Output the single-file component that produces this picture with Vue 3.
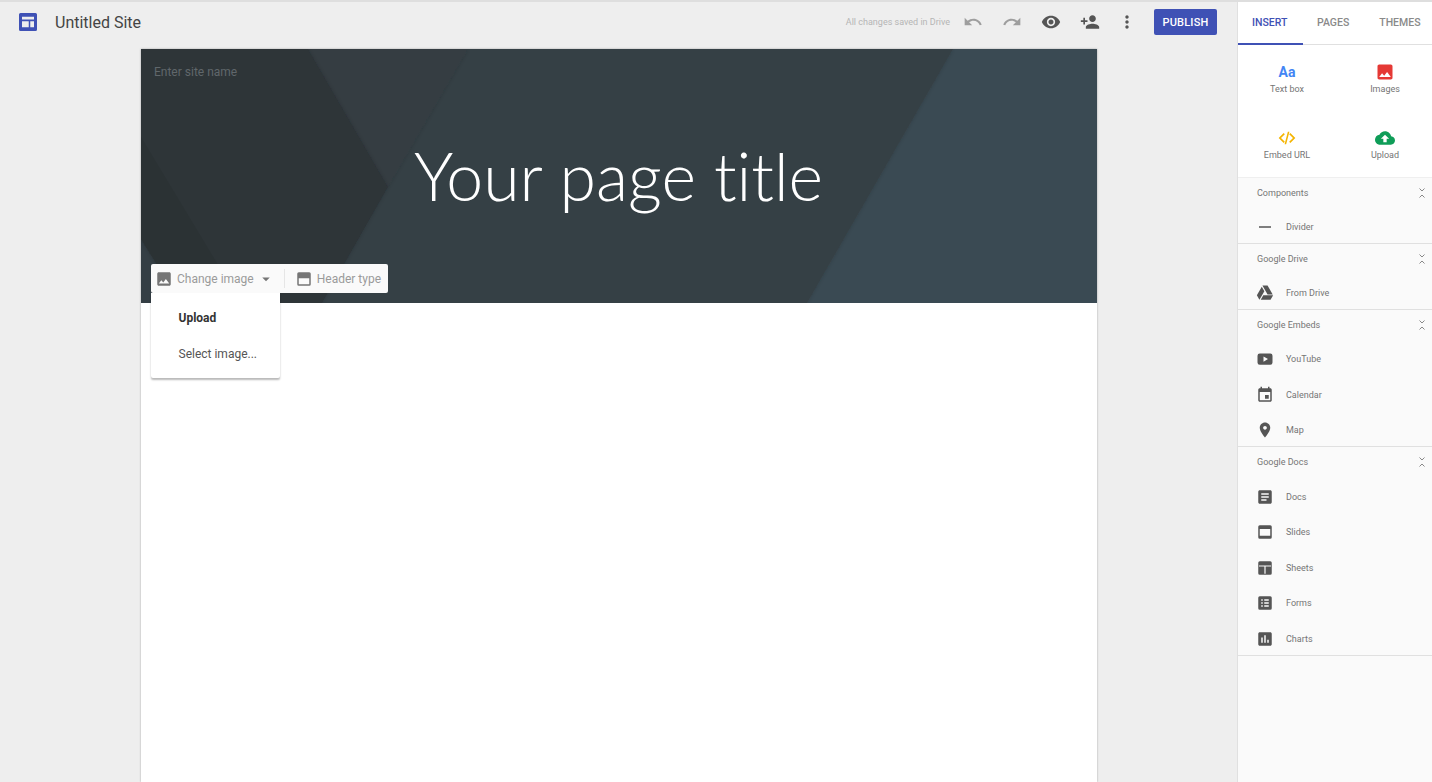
<script setup>
const P = {
  undo: 'M12.5 8c-2.65 0-5.05.99-6.9 2.6L2 7v9h9l-3.62-3.62c1.39-1.16 3.16-1.88 5.12-1.88 3.54 0 6.55 2.31 7.6 5.5l2.37-.78C21.08 11.03 17.15 8 12.5 8z',
  redo: 'M18.4 10.6C16.55 8.99 14.15 8 11.5 8c-4.65 0-8.58 3.03-9.96 7.22L3.9 16c1.05-3.19 4.05-5.5 7.6-5.5 1.95 0 3.73.72 5.12 1.88L13 16h9V7l-3.6 3.6z',
  eye: 'M12 4.5C7 4.5 2.73 7.61 1 12c1.73 4.39 6 7.5 11 7.5s9.27-3.11 11-7.5c-1.73-4.39-6-7.5-11-7.5zM12 17c-2.76 0-5-2.24-5-5s2.24-5 5-5 5 2.24 5 5-2.24 5-5 5zm0-8c-1.66 0-3 1.34-3 3s1.34 3 3 3 3-1.34 3-3-1.34-3-3-3z',
  add: 'M15 12c2.21 0 4-1.79 4-4s-1.79-4-4-4-4 1.79-4 4 1.79 4 4 4zm-9-2V7H4v3H1v2h3v3h2v-3h3v-2H6zm9 4c-2.67 0-8 1.34-8 4v2h16v-2c0-2.66-5.33-4-8-4z',
  more: 'M12 8c1.1 0 2-.9 2-2s-.9-2-2-2-2 .9-2 2 .9 2 2 2zm0 2c-1.1 0-2 .9-2 2s.9 2 2 2 2-.9 2-2-.9-2-2-2zm0 6c-1.1 0-2 .9-2 2s.9 2 2 2 2-.9 2-2-.9-2-2-2z',
  photo: 'M21 19V5c0-1.1-.9-2-2-2H5c-1.1 0-2 .9-2 2v14c0 1.1.9 2 2 2h14c1.1 0 2-.9 2-2zM8.5 13.5l2.5 3.01L14.5 12l4.5 6H5l3.5-4.5z',
  code: 'M9.4 16.6L4.8 12l4.6-4.6L8 6l-6 6 6 6 1.4-1.4zm5.2 0l4.6-4.6-4.6-4.6L16 6l6 6-6 6-1.4-1.4zM13 4.5h1.9L11 19.5H9.1z',
  cloud: 'M19.35 10.04C18.67 6.59 15.64 4 12 4 9.11 4 6.6 5.64 5.35 8.04 2.34 8.36 0 10.91 0 14c0 3.31 2.69 6 6 6h13c2.76 0 5-2.24 5-5 0-2.64-2.05-4.78-4.65-4.96zM14 13v4h-4v-4H7l5-5 5 5h-3z',
  header: 'M5 3h14a2 2 0 0 1 2 2v14a2 2 0 0 1-2 2H5a2 2 0 0 1-2-2V5a2 2 0 0 1 2-2zm0 8v8h14v-8z',
  logo: 'M2 0h20a2 2 0 0 1 2 2v20a2 2 0 0 1-2 2H2a2 2 0 0 1-2-2V2a2 2 0 0 1 2-2zM4 5v3.5h16V5zM4 11v8h9v-8zM15 11v8h5v-8z',
  divider: 'M4 11h16v2H4z',
  drive: 'M7.71 3.5L1.15 15l3.43 6 6.55-11.5zM9.73 15l-3.43 6h13.12l3.43-6zM22.28 14L15.42 2H8.58l6.85 12z',
  youtube: 'M5 4.5h14a3 3 0 0 1 3 3v9a3 3 0 0 1-3 3H5a3 3 0 0 1-3-3v-9a3 3 0 0 1 3-3zM10 8.5v7l6-3.5z',
  calendar: 'M17 12h-5v5h5v-5zM16 1v2H8V1H6v2H5c-1.11 0-1.99.9-1.99 2L3 19c0 1.1.89 2 2 2h14c1.1 0 2-.9 2-2V5c0-1.1-.9-2-2-2h-1V1h-2zm3 18H5V8h14v11z',
  map: 'M12 2C8.13 2 5 5.13 5 9c0 5.25 7 13 7 13s7-7.75 7-13c0-3.87-3.13-7-7-7zm0 9.5c-1.38 0-2.5-1.12-2.5-2.5s1.12-2.5 2.5-2.5 2.5 1.12 2.5 2.5-1.12 2.5-2.5 2.5z',
  docs: 'M19 3H5c-1.1 0-2 .9-2 2v14c0 1.1.9 2 2 2h14c1.1 0 2-.9 2-2V5c0-1.1-.9-2-2-2zm-5 14H7v-2h7v2zm3-4H7v-2h10v2zm0-4H7V7h10v2z',
  slides: 'M5 3h14a2 2 0 0 1 2 2v14a2 2 0 0 1-2 2H5a2 2 0 0 1-2-2V5a2 2 0 0 1 2-2zm0 5v9h14V8z',
  sheets: 'M5 3h14a2 2 0 0 1 2 2v14a2 2 0 0 1-2 2H5a2 2 0 0 1-2-2V5a2 2 0 0 1 2-2zM4 8.5V10h7.2v9.5h1.6V10H20V8.5z',
  forms: 'M5 3h14a2 2 0 0 1 2 2v14a2 2 0 0 1-2 2H5a2 2 0 0 1-2-2V5a2 2 0 0 1 2-2zm2 4v2h2V7zm4 0v2h6V7zm-4 4v2h2v-2zm4 0v2h6v-2zm-4 4v2h2v-2zm4 0v2h6v-2z',
  charts: 'M19 3H5c-1.1 0-2 .9-2 2v14c0 1.1.9 2 2 2h14c1.1 0 2-.9 2-2V5c0-1.1-.9-2-2-2zM9 17H7v-7h2v7zm4 0h-2V7h2v10zm4 0h-2v-4h2v4z'
}

const actions = [
  { key: 'undo', cls: 'muted' },
  { key: 'redo', cls: 'muted' },
  { key: 'eye', cls: 'strong' },
  { key: 'add', cls: 'strong' },
  { key: 'more', cls: 'strong narrow' }
]

const sections = [
  { title: 'Components', items: [{ label: 'Divider', icon: 'divider' }] },
  { title: 'Google Drive', items: [{ label: 'From Drive', icon: 'drive' }] },
  { title: 'Google Embeds', items: [
    { label: 'YouTube', icon: 'youtube' },
    { label: 'Calendar', icon: 'calendar' },
    { label: 'Map', icon: 'map' }
  ] },
  { title: 'Google Docs', items: [
    { label: 'Docs', icon: 'docs' },
    { label: 'Slides', icon: 'slides' },
    { label: 'Sheets', icon: 'sheets' },
    { label: 'Forms', icon: 'forms' },
    { label: 'Charts', icon: 'charts' }
  ] }
]
</script>

<template>
  <div class="app">
    <div class="work">
      <header class="topbar">
        <svg class="logo" viewBox="0 0 24 24"><path fill-rule="evenodd" :d="P.logo" /></svg>
        <span class="site-title">Untitled Site</span>
        <span class="saved">All changes saved in Drive</span>
        <span v-for="a in actions" :key="a.key" class="action" :class="a.cls">
          <svg viewBox="0 0 24 24"><path :d="P[a.key]" /></svg>
        </span>
        <button class="publish">PUBLISH</button>
      </header>

      <div class="canvas">
        <section class="hero">
          <svg class="hero-art" viewBox="0 0 956 254" preserveAspectRatio="none">
            <defs>
              <filter id="soft" x="-10%" y="-10%" width="120%" height="120%">
                <feDropShadow dx="0" dy="0" stdDeviation="2" flood-color="#000" flood-opacity="0.16" />
              </filter>
            </defs>
            <rect width="956" height="254" fill="#3a4a53" />
            <polygon points="-20,0 812,0 666,254 -20,254" fill="#364045" filter="url(#soft)" />
            <polygon points="160,0 327,0 247,138" fill="#343d42" filter="url(#soft)" />
            <polygon points="0,190 40,254 0,254" fill="#343e44" />
            <polygon points="167,0 247,138 181,254 40,254 0,190 0,0" fill="#2d3439" filter="url(#soft)" />
            <polygon points="0,88 100,254 40,254 0,190" fill="#2b3234" />
          </svg>
          <div class="site-name">Enter site name</div>
          <h1 class="page-title">Your page title</h1>
          <div class="hero-tools">
            <span class="tool">
              <svg viewBox="0 0 24 24"><path :d="P.photo" /></svg>
              Change image
              <svg class="caret" viewBox="0 0 24 24"><path d="M7 10l5 5 5-5z" /></svg>
            </span>
            <span class="tool-sep"></span>
            <span class="tool">
              <svg viewBox="0 0 24 24"><path fill-rule="evenodd" :d="P.header" /></svg>
              Header type
            </span>
          </div>
          <div class="menu">
            <div class="menu-item bold">Upload</div>
            <div class="menu-item">Select image...</div>
          </div>
        </section>
      </div>
    </div>

    <aside class="side">
      <nav class="tabs">
        <span class="tab active">INSERT</span>
        <span class="tab">PAGES</span>
        <span class="tab">THEMES</span>
      </nav>
      <div class="inserts">
        <div class="insert">
          <span class="aa">Aa</span>
          <span>Text box</span>
        </div>
        <div class="insert">
          <svg class="red" viewBox="0 0 24 24"><path :d="P.photo" /></svg>
          <span>Images</span>
        </div>
        <div class="insert">
          <svg class="yellow" viewBox="0 0 24 24"><path :d="P.code" /></svg>
          <span>Embed URL</span>
        </div>
        <div class="insert">
          <svg class="green" viewBox="0 0 24 24"><path :d="P.cloud" /></svg>
          <span>Upload</span>
        </div>
      </div>
      <div class="groups">
        <section v-for="s in sections" :key="s.title" class="group">
          <div class="group-head">
            <span>{{ s.title }}</span>
            <svg class="chev" viewBox="0 0 8 12">
              <path d="M1.5 1.5L4 4l2.5-2.5M1.5 10.5L4 8l2.5 2.5" />
            </svg>
          </div>
          <div v-for="i in s.items" :key="i.label" class="row">
            <svg viewBox="0 0 24 24"><path fill-rule="evenodd" :d="P[i.icon]" /></svg>
            <span>{{ i.label }}</span>
          </div>
        </section>
      </div>
    </aside>
  </div>
</template>

<style>
html, body { margin: 0; height: 100%; overflow: hidden; background: #eeeeee; }
</style>

<style scoped>
.app {
  display: flex;
  height: 782px;
  width: 1432px;
  overflow: hidden;
  box-sizing: border-box;
  border-top: 2px solid #dedede;
  background: #eeeeee;
  font-family: Roboto, "Liberation Sans", sans-serif;
}
.work { width: 1237px; flex: none; display: flex; flex-direction: column; }
.topbar {
  height: 47px;
  flex: none;
  box-sizing: border-box;
  display: flex;
  align-items: center;
  padding: 0 20px 7px 19px;
}
.logo { width: 18px; height: 18px; fill: #3f51b5; }
.site-title { margin-left: 18px; font-size: 16px; color: #444; }
.saved { margin-left: auto; margin-right: 3px; font-size: 9px; color: #b5b5b5; }
.action { width: 39px; display: flex; justify-content: center; }
.action.narrow { width: 36px; }
.action svg { width: 20px; height: 20px; }
.muted svg { fill: #9e9e9e; }
.strong svg { fill: #555; }
.publish {
  margin-left: 9px;
  width: 63px;
  height: 26px;
  padding: 0;
  border: 0;
  border-radius: 2px;
  background: #3f51b5;
  color: #fff;
  font: 500 11px Roboto, sans-serif;
  letter-spacing: 0.2px;
}
.canvas {
  flex: 1;
  margin-left: 141px;
  width: 956px;
  background: #fff;
  box-shadow: 0 0 2px rgba(0, 0, 0, 0.3);
}
.hero {
  position: relative;
  height: 254px;
  display: flex;
  align-items: center;
  justify-content: center;
}
.hero-art { position: absolute; inset: 0; width: 100%; height: 100%; }
.site-name {
  position: absolute;
  left: 13px;
  top: 16px;
  font-size: 12px;
  line-height: 14px;
  color: #60676b;
}
.page-title {
  position: relative;
  margin: 1px 0 0 -1px;
  font: 300 66.2px/1 Lato, sans-serif;
  font-variant-ligatures: none;
  color: #fff;
}
.hero-tools {
  position: absolute;
  left: 10px;
  top: 215px;
  z-index: 2;
  height: 29px;
  display: flex;
  align-items: center;
  padding: 0 7px 0 4px;
  background: #fafafa;
  border-radius: 2px;
  font-size: 12px;
  color: #9a9a9a;
}
.tool { display: flex; align-items: center; gap: 4px; }
.tool svg { width: 18px; height: 18px; fill: #757575; }
.tool .caret { margin-left: -1px; }
.tool-sep { width: 1px; height: 19px; margin: 0 10px 0 9px; background: #e6e6e6; }
.menu {
  position: absolute;
  left: 10px;
  top: 244px;
  width: 129px;
  height: 85px;
  box-sizing: border-box;
  padding-top: 7px;
  background: #fff;
  border-radius: 0 0 2px 2px;
  box-shadow: 0 2px 2px rgba(0, 0, 0, 0.28);
  font-size: 12px;
  color: #555;
}
.menu-item { height: 36px; line-height: 36px; padding-left: 27.5px; }
.menu-item.bold { font-weight: 700; color: #333; }
.side {
  width: 194px;
  flex: none;
  display: flex;
  flex-direction: column;
  background: #fafafa;
  border-left: 1px solid #e0e0e0;
}
.tabs {
  height: 43px;
  flex: none;
  box-sizing: border-box;
  display: flex;
  background: #fff;
  border-bottom: 1px solid #e0e0e0;
  font-size: 10.5px;
  font-weight: 500;
  line-height: 42px;
  color: #8a8a8a;
}
.tab { padding: 0 14px; height: 43px; box-sizing: border-box; }
.tab.active {
  width: 65px;
  padding: 0 14px;
  color: #3f51b5;
  border-bottom: 2px solid #3f51b5;
}
.tab:last-child { margin-left: 16px; padding: 0; }
.inserts {
  flex: none;
  display: grid;
  grid-template-columns: 98px 98px;
  grid-auto-rows: 66px;
  background: #fff;
}
.insert {
  display: flex;
  flex-direction: column;
  align-items: center;
  box-sizing: border-box;
  padding-top: 17px;
  gap: 1px;
  font-size: 9px;
  line-height: 12px;
  color: #757575;
}
.insert svg { width: 20px; height: 20px; }
.aa { height: 20px; font-size: 14px; font-weight: 700; line-height: 20px; color: #4285f4; }
.red { fill: #e53935; }
.yellow { fill: #f4b400; }
.green { fill: #0f9d58; }
.group { border-top: 1px solid #e0e0e0; }
.group:first-child { border-top-color: #efefef; }
.group:last-child { border-bottom: 1px solid #e0e0e0; }
.group-head {
  height: 29.5px;
  box-sizing: border-box;
  padding: 0 6px 0 19px;
  display: flex;
  align-items: center;
  justify-content: space-between;
  font-size: 9px;
  color: #757575;
}
.group:first-child .group-head { padding-top: 1px; }
.chev { width: 8px; height: 12px; fill: none; stroke: #888; stroke-width: 1; }
.row {
  height: 35.6px;
  box-sizing: border-box;
  padding: 3.6px 0 0 18px;
  display: flex;
  align-items: center;
  gap: 12px;
  font-size: 9px;
  color: #757575;
}
.row svg { width: 18px; height: 18px; fill: #555; flex: none; }
</style>
